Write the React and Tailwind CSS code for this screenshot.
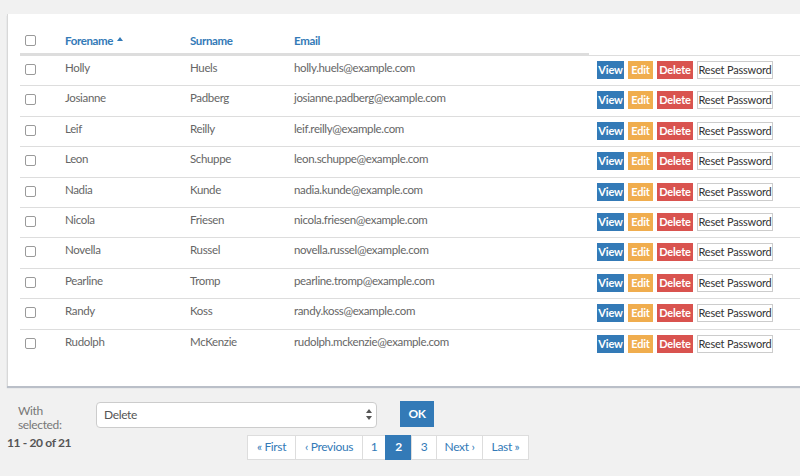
import React from 'react';

const people = [
  ['Holly', 'Huels', 'holly.huels@example.com'],
  ['Josianne', 'Padberg', 'josianne.padberg@example.com'],
  ['Leif', 'Reilly', 'leif.reilly@example.com'],
  ['Leon', 'Schuppe', 'leon.schuppe@example.com'],
  ['Nadia', 'Kunde', 'nadia.kunde@example.com'],
  ['Nicola', 'Friesen', 'nicola.friesen@example.com'],
  ['Novella', 'Russel', 'novella.russel@example.com'],
  ['Pearline', 'Tromp', 'pearline.tromp@example.com'],
  ['Randy', 'Koss', 'randy.koss@example.com'],
  ['Rudolph', 'McKenzie', 'rudolph.mckenzie@example.com'],
];

function Box() {
  return <span className="block w-[11px] h-[11px] rounded-[2px] border border-[#9a9a9a] bg-white" />;
}

function Pager() {
  const items = [
    { label: '« First', w: 'w-[49px]' },
    { label: '‹ Previous', w: 'w-[68px]' },
    { label: '1', w: 'w-[24px]' },
    { label: '2', w: 'w-[27px]', active: true },
    { label: '3', w: 'w-[26px]' },
    { label: 'Next ›', w: 'w-[47px]' },
    { label: 'Last »', w: 'w-[47px]' },
  ];
  return (
    <div className="flex">
      {items.map((it, i) => (
        <span
          key={i}
          className={`${it.w} h-[25px] flex items-center justify-center whitespace-nowrap text-[12px] border -ml-px first:ml-0 ${
            it.active ? 'bg-[#337ab7] border-[#337ab7] text-white font-bold' : 'bg-white border-[#dddddd] text-[#337ab7]'
          }`}
        >
          {it.label}
        </span>
      ))}
    </div>
  );
}

export default function App() {
  return (
    <div
      className="w-[800px] h-[476px] overflow-hidden bg-[#f1f1f1] pt-[14px] tracking-[-0.35px]"
      style={{ fontFamily: 'Lato, "Open Sans", sans-serif' }}
    >
      {/* Table panel */}
      <div className="ml-[7px] w-[820px] bg-white border-l border-[#d8d8d8] shadow-[0_2px_1px_rgba(120,130,150,0.45)] pl-[12px] pb-[27px]">
        {/* Header */}
        <div className="flex h-[41px] items-end text-[11.5px] font-bold text-[#337ab7]">
          <div className="w-[37px] h-full pl-[5px] pt-[21px] border-b-2 border-[#dddddd]"><Box /></div>
          <div className="w-[125px] h-full pl-[8px] pt-[18px] border-b-2 border-[#dddddd] flex items-start gap-[4px]">
            Forename
            <svg width="6" height="4" viewBox="0 0 6 4" className="mt-[5px]"><path d="M0 4L3 0L6 4Z" fill="#337ab7" /></svg>
          </div>
          <div className="w-[104px] h-full pl-[8px] pt-[18px] border-b-2 border-[#dddddd]">Surname</div>
          <div className="w-[303px] h-full pl-[8px] pt-[18px] border-b-2 border-[#dddddd]">Email</div>
          <div className="flex-1 h-full" />
        </div>
        {/* Rows */}
        {people.map(([f, s, e]) => (
          <div key={e} className="flex h-[30.4px] border-t border-[#dddddd] text-[11.5px] text-[#666666] leading-[16px]">
            <div className="w-[37px] pl-[5px] pt-[8px]"><Box /></div>
            <div className="w-[125px] pl-[8px] pt-[4px]">{f}</div>
            <div className="w-[104px] pl-[8px] pt-[4px]">{s}</div>
            <div className="w-[303px] pl-[8px] pt-[4px]">{e}</div>
            <div className="flex-1 pl-[8px] pt-[5px] flex gap-[4px] items-start text-[11px] font-bold whitespace-nowrap tracking-[-0.2px]">
              <span className="h-[18px] w-[27px] flex items-center justify-center bg-[#337ab7] text-white">View</span>
              <span className="h-[18px] w-[25px] flex items-center justify-center bg-[#f0ad4e] text-white">Edit</span>
              <span className="h-[18px] w-[36px] flex items-center justify-center bg-[#d9534f] text-white">Delete</span>
              <span className="h-[18px] w-[76px] flex items-center justify-center bg-white border border-[#cccccc] text-[#333333] font-normal">Reset Password</span>
            </div>
          </div>
        ))}
      </div>

      {/* Bulk actions */}
      <div className="flex items-start mt-[16px]">
        <div className="w-[96px] pl-[18px] pt-[2px] text-[12px] leading-[14px] text-[#777777]">
          With<br />selected:
        </div>
        <div className="w-[281px] h-[26px] rounded-[4px] border border-[#cccccc] bg-white flex items-center justify-between pl-[7px] pr-[4px] text-[12px] text-[#555555]">
          <span>Delete</span>
          <svg width="6" height="11" viewBox="0 0 6 11"><path d="M0 4L3 0L6 4Z M0 7L3 11L6 7Z" fill="#555555" /></svg>
        </div>
        <div className="ml-[23px] -mt-[1px] w-[34px] h-[26px] bg-[#337ab7] text-white text-[12px] font-bold flex items-center justify-center">OK</div>
      </div>

      {/* Count + pagination */}
      <div className="flex items-start mt-[3px]">
        <div className="w-[247px] pl-[7px] pt-[1px] text-[12px] font-bold text-[#555555] leading-[14px]">11 - 20 of 21</div>
        <Pager />
      </div>
    </div>
  );
}
